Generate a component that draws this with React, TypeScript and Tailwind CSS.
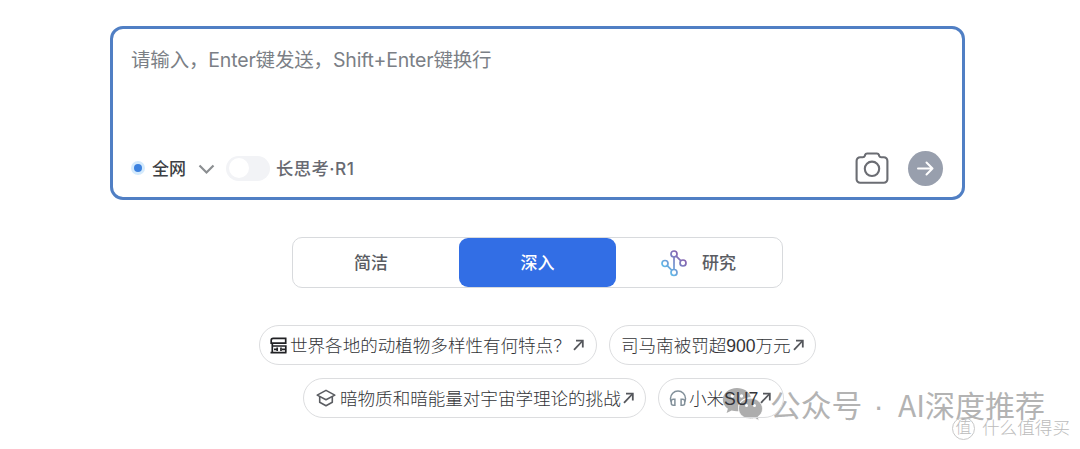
import type { ReactNode } from "react";

function ArrowUpRight() {
  return (
    <svg className="ml-[2px]" width="11" height="12" viewBox="0 0 11 12" fill="none" stroke="#55575c" strokeWidth="1.8">
      <path d="M1 10.800 9.400 2" />
      <path d="M3 1.600h6.800v6.800" />
    </svg>
  );
}

function CameraIcon() {
  return (
    <svg width="34" height="34" viewBox="0 0 34 34" fill="none" stroke="#6b6d73" strokeWidth="2.100">
      <path d="M5.200 6.300h2.600c1 0 1.700-.5 2-1.400l.3-1c.3-.9 1-1.400 2-1.400h9.800c1 0 1.700.5 2 1.400l.3 1c.3.9 1 1.400 2 1.400h2.600a3.600 3.600 0 0 1 3.600 3.600v18.300a3.600 3.600 0 0 1-3.600 3.600H5.200a3.600 3.600 0 0 1-3.600-3.600V9.900a3.600 3.600 0 0 1 3.600-3.600Z" />
      <circle cx="17" cy="17.800" r="7.200" />
    </svg>
  );
}

function GraphIcon() {
  return (
    <svg width="28" height="28" viewBox="0 0 28 28" fill="none" stroke="url(#graph)" strokeWidth="1.7">
      <defs>
        <linearGradient id="graph" gradientUnits="userSpaceOnUse" x1="6" y1="20" x2="20" y2="7">
          <stop offset="0" stopColor="#62b8e8" />
          <stop offset="1" stopColor="#8565b0" />
        </linearGradient>
      </defs>
      <circle cx="5" cy="14.500" r="3" />
      <circle cx="14" cy="5" r="3" />
      <circle cx="14" cy="23.500" r="3" />
      <circle cx="23" cy="14" r="3" />
      <path d="M14.010 8 14 20.500M7.200 16.700l4.700 4.600M16.200 7.100l4.700 4.700" />
    </svg>
  );
}

function PanelIcon() {
  return (
    <svg width="17" height="17" viewBox="0 0 17 17" fill="none" stroke="#202124" strokeWidth="1.700">
      <path d="M16.500 1.300H3.200c-1.300 0-2 .7-2 2v2.800h14.500V1.300" />
      <path d="M2.300 6v9.600M.5 15.600h16M2.300 9h13.500v6.600M4 12.300h2.500M12 12.300h3M7.200 10.600v3.400M11 10.600v3.400" />
    </svg>
  );
}

function CapIcon() {
  return (
    <svg width="20" height="18" viewBox="0 0 20 18" fill="none" stroke="#5b5d62" strokeWidth="1.600" strokeLinejoin="round">
      <path d="m10 1.400 8.800 4.700L10 10.800 1.200 6.100Z" />
      <path d="M3.700 7.800v5.500L10 16.700l6.300-3.400V7.800" />
    </svg>
  );
}

function HeadphonesIcon() {
  return (
    <svg width="18" height="17" viewBox="0 0 18 17" fill="none" stroke="#82909a" strokeWidth="1.500">
      <path d="M2.300 11.800A7.200 7.200 0 0 1 1.500 8.500a7.500 7.500 0 0 1 15 0c0 1.200-.3 2.300-.8 3.300" />
      <path d="M5.900 9.300H4.300a2 2 0 0 0-2 2v1.900a2 2 0 0 0 2 2h1.600ZM12.100 9.300h1.600a2 2 0 0 1 2 2v1.900a2 2 0 0 1-2 2h-1.600Z" />
    </svg>
  );
}

function WechatIcon() {
  return (
    <svg width="41" height="35" viewBox="0 0 41 35">
      <path fill="#adadad" d="M15 1C7 1 .8 6.200.8 12.700c0 3.600 2 6.800 5.100 9L4.600 26l5-2.500c1.700.5 3.500.8 5.400.8h1.500c-2.200-8.500 4.700-14.200 12.400-14C27.500 4.900 21.800 1 15 1Z" />
      <path fill="#adadad" stroke="#fff" strokeWidth=".7" d="M28.500 11.200c-6.700 0-12 4.500-12 10.300s5.300 10.300 12 10.300c1.500 0 3-.2 4.300-.6l4.200 2.400-1-3.900c2.800-1.800 4.500-4.700 4.500-7.900 0-5.800-5.300-10.600-12-10.600Z" />
      <g fill="#fff">
        <circle cx="10.300" cy="9" r="1.700" />
        <circle cx="19.500" cy="9" r="1.700" />
        <circle cx="24.500" cy="18.500" r="1.500" />
        <circle cx="32.500" cy="18.500" r="1.500" />
      </g>
    </svg>
  );
}

interface ChipProps {
  className: string;
  icon?: ReactNode;
  children: ReactNode;
}

function Chip({ className, icon, children }: ChipProps) {
  return (
    <button className={`flex h-10 items-center rounded-full border border-[#dcdddf] text-[17.600px] font-light whitespace-nowrap text-[#333438] ${className}`}>
      {icon}
      <span className="pt-[2px] tracking-[-0.050px]">{children}</span>
      <ArrowUpRight />
    </button>
  );
}

export default function App() {
  return (
    <div className="relative h-[449px] w-[1080px] overflow-hidden bg-white pt-[26px] font-['Liberation_Sans','Noto_Sans_CJK_SC',sans-serif]">
      <div className="ml-[110px] flex h-[174px] w-[855px] flex-col justify-between rounded-[13px] border-3 border-[#507fc4] pt-[17px] pr-[19px] pb-[11px] pl-[18px]">
        <div className="font-['Inter','Noto_Sans_CJK_SC',sans-serif] text-[19.500px] leading-7 tracking-[-0.170px] text-[#7b7f86]">
          请输入，Enter键发送，Shift+Enter键换行
        </div>
        <div className="flex h-9 items-center">
          <span className="flex size-[14px] items-center justify-center rounded-full bg-[#d4eafc]">
            <span className="size-[8px] rounded-full bg-[#3d82df]" />
          </span>
          <span className="ml-[7px] pt-[3px] text-[17px] font-medium text-[#3d3f45]">全网</span>
          <svg className="mt-[2px] ml-3" width="17" height="11" viewBox="0 0 17 11" fill="none" stroke="#8b8e91" strokeWidth="2.200">
            <path d="m1.500 1.500 7 7 7-7" />
          </svg>
          <span className="ml-[11px] flex h-[25px] w-11 items-center rounded-full bg-[#f2f3f6] pl-[3px]">
            <span className="size-[20px] rounded-full bg-white" />
          </span>
          <span className="ml-[6px] pt-[2px] font-['Inter','Noto_Sans_CJK_SC',sans-serif] text-[17.300px] font-medium tracking-[0.500px] text-[#686a72]">
            长思考·R1
          </span>
          <span className="ml-auto">
            <CameraIcon />
          </span>
          <button className="ml-[19px] flex size-[35px] items-center justify-center rounded-full bg-[#989fad]">
            <svg width="17" height="15" viewBox="0 0 17 15" fill="none" stroke="#fff" strokeWidth="2" strokeLinecap="round" strokeLinejoin="round">
              <path d="M1 7.500h14.500M9.500 1.500l6 6-6 6" />
            </svg>
          </button>
        </div>
      </div>

      <div className="mt-[37px] ml-[292px] flex h-[51px] w-[491px] rounded-[10px] border border-[#d8dadd] text-[17px] font-medium text-[#5a5c62]">
        <button className="flex w-[166px] items-center justify-center pt-[2px] pr-[10px]">简洁</button>
        <button className="flex w-[157px] items-center justify-center rounded-[9px] bg-[#326ee5] pt-[2px] text-white">
          深入
        </button>
        <button className="flex flex-1 items-center pl-[44px]">
          <GraphIcon />
          <span className="ml-[14px] pt-[2px]">研究</span>
        </button>
      </div>

      <div className="mt-[37px] ml-[259px] flex gap-3">
        <Chip className="w-[338px] pl-[10px]" icon={<PanelIcon />}>
          <span className="ml-[3px]">世界各地的动植物多样性有何特点？</span>
        </Chip>
        <Chip className="w-[207px] pl-[11px]">司马南被罚超900万元</Chip>
      </div>
      <div className="mt-[13px] ml-[303px] flex gap-3">
        <Chip className="w-[343px] pl-[12px]" icon={<CapIcon />}>
          <span className="ml-[4px]">暗物质和暗能量对宇宙学理论的挑战</span>
        </Chip>
        <Chip className="relative z-10 w-[126px] pl-[10px]" icon={<HeadphonesIcon />}>
          <span className="ml-[2px]">小米SU7</span>
        </Chip>
      </div>

      <div className="absolute top-[387px] left-[722px] flex items-start font-['Noto_Sans_CJK_SC',sans-serif] whitespace-nowrap text-[#b3b3b3]">
        <WechatIcon />
        <span className="-mt-px ml-[7px] w-[128px] text-[30.800px] leading-9">
          公众号
          <span className="ml-[11px] font-['Liberation_Sans',sans-serif]">·</span>
        </span>
        <span className="-mt-px text-[30px] leading-9">AI深度推荐</span>
      </div>
      <div className="absolute top-[416px] left-[952px] flex items-center whitespace-nowrap text-[#bcbcbc]">
        <span className="flex size-[23px] items-center justify-center rounded-full border border-[#c8c8c8] text-[16px] font-light">
          值
        </span>
        <span className="ml-[7px] text-[17.600px] leading-6 font-light">什么值得买</span>
      </div>
    </div>
  );
}
